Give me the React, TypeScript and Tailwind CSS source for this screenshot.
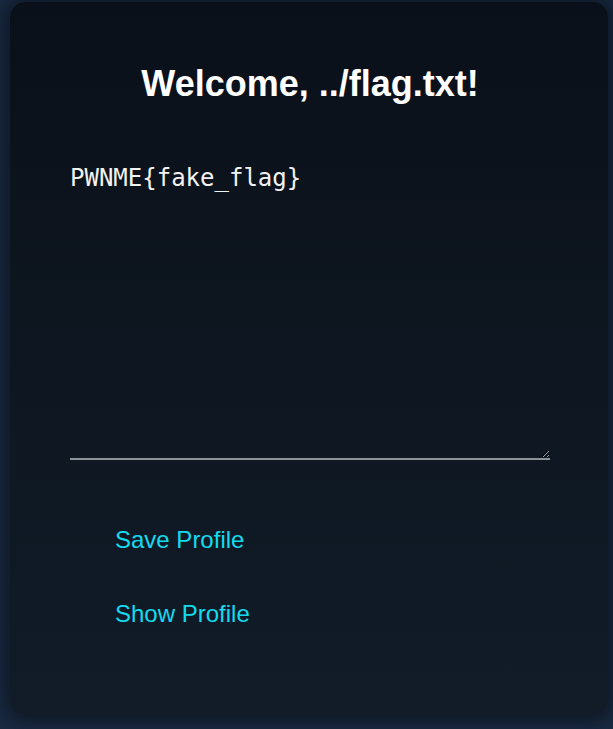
export default function App() {
  return (
    <div className="min-h-screen w-full overflow-hidden bg-[#1a2b42] pt-[2px] font-['Liberation_Sans',Arial,sans-serif]">
      {/* Profile card */}
      <div className="ml-[10px] flex h-[714px] w-[598px] flex-col items-center rounded-[15px] bg-gradient-to-b from-[#0a1019] to-[#111c28] pt-[61px] pl-[2px] shadow-[0_0_18px_6px_rgba(5,10,18,0.55)]">
        <h1 className="text-[36px] leading-[41px] font-bold text-white">
          Welcome, ../flag.txt!
        </h1>

        <textarea
          className="mt-[50px] h-[306px] w-[480px] border-0 border-b-2 border-[#8e9399] bg-transparent px-0 pt-[10px] font-['DejaVu_Sans_Mono',monospace] text-[24px] leading-[28px] text-[#f2f2f2] outline-none"
          defaultValue="PWNME{fake_flag}"
          spellCheck={false}
        />

        {/* Actions */}
        <div className="mt-[66px] flex w-[480px] flex-col items-start gap-[46px] pl-[45px]">
          <button className="cursor-pointer bg-transparent text-[24px] leading-[28px] text-[#12dbef]">
            Save Profile
          </button>
          <button className="cursor-pointer bg-transparent text-[24px] leading-[28px] text-[#12dbef]">
            Show Profile
          </button>
        </div>
      </div>
    </div>
  );
}
